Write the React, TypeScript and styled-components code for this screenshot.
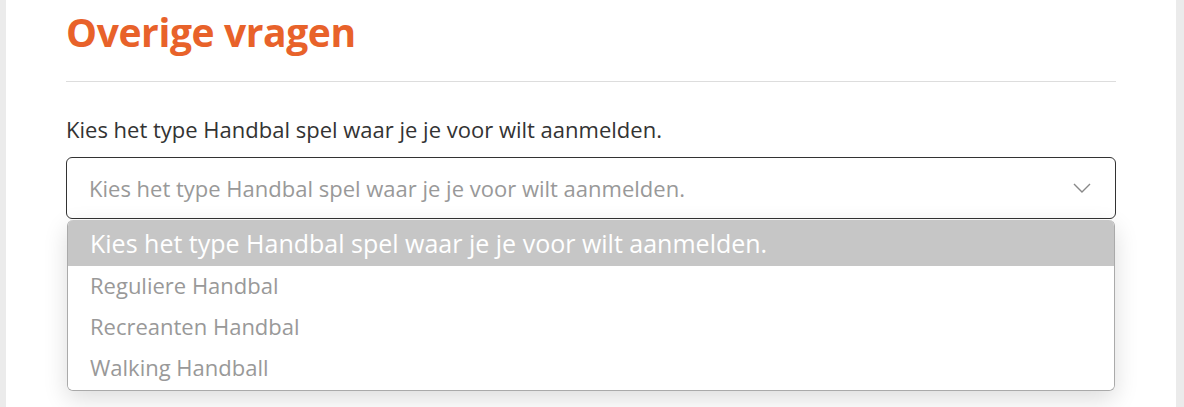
import React, { useState } from "react";
import styled, { createGlobalStyle } from "styled-components";

const GlobalStyle = createGlobalStyle`
  html, body {
    margin: 0;
    padding: 0;
    background: #ebebeb;
    font-family: "Open Sans", "Liberation Sans", sans-serif;
  }
`;

const options = [
  "Kies het type Handbal spel waar je je voor wilt aanmelden.",
  "Reguliere Handbal",
  "Recreanten Handbal",
  "Walking Handball",
];

const Page = styled.div`
  padding: 0 8px 0 6px;
  height: 407px;
  overflow: hidden;
`;

const Card = styled.section`
  background: #fff;
  height: 100%;
  padding: 0 60px;
`;

const Title = styled.h2`
  margin: 0;
  padding-top: 5px;
  font-size: 39px;
  line-height: 54px;
  font-weight: 700;
  color: #e8622a;
  letter-spacing: -0.4px;
`;

const Divider = styled.hr`
  border: 0;
  border-top: 1px solid #dddddd;
  margin: 22px 0 0;
`;

const Label = styled.label`
  display: block;
  margin-top: 33px;
  font-size: 22px;
  line-height: 28px;
  color: #333;
`;

const SelectWrap = styled.div`
  position: relative;
  margin-top: 14px;
`;

const SelectBox = styled.div`
  height: 62px;
  box-sizing: border-box;
  border: 1px solid #333;
  border-radius: 6px;
  display: flex;
  align-items: center;
  justify-content: space-between;
  padding: 0 24px 0 22px;
  font-size: 22px;
  color: #999;
  cursor: pointer;
`;

const Menu = styled.ul`
  position: absolute;
  left: 1px;
  right: 1px;
  top: 63px;
  margin: 0;
  padding: 0;
  list-style: none;
  background: #fff;
  border: 1px solid #aaa;
  border-top: 0;
  border-radius: 6px;
  overflow: hidden;
  box-shadow: 0 8px 24px rgba(0, 0, 0, 0.14);
`;

const Option = styled.li<{ $active?: boolean }>`
  display: flex;
  align-items: center;
  box-sizing: border-box;
  padding: ${(p) => (p.$active ? "0 22px" : "0 22px 4px")};
  height: ${(p) => (p.$active ? "46px" : "41px")};
  font-size: ${(p) => (p.$active ? "25px" : "22px")};
  background: ${(p) => (p.$active ? "#c6c6c6" : "#fff")};
  color: ${(p) => (p.$active ? "#fff" : "#999")};
  &:last-child {
    height: 42px;
  }
`;

const Chevron = () => (
  <svg width="18" height="10" viewBox="0 0 18 10" fill="none">
    <path d="M1 1l8 8 8-8" stroke="#888" strokeWidth="1.4" />
  </svg>
);

export default function App() {
  const [active] = useState(0);
  return (
    <Page>
      <GlobalStyle />
      <Card>
        <Title>Overige vragen</Title>
        <Divider />
        <Label>Kies het type Handbal spel waar je je voor wilt aanmelden.</Label>
        <SelectWrap>
          <SelectBox>
            <span>{options[0]}</span>
            <Chevron />
          </SelectBox>
          <Menu>
            {options.map((o, i) => (
              <Option key={o} $active={i === active}>
                {o}
              </Option>
            ))}
          </Menu>
        </SelectWrap>
      </Card>
    </Page>
  );
}
